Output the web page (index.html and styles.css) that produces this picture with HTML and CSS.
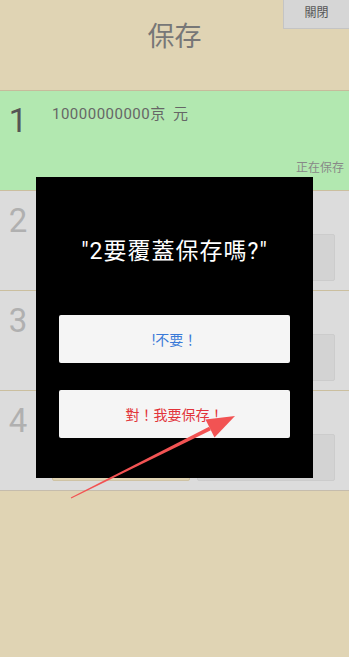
FILE: index.html
```html
<!DOCTYPE html>
<html lang="zh-Hant">
<head>
    <meta charset="UTF-8">
    <meta name="viewport" content="width=device-width, initial-scale=1.0">
    <title>保存</title>
    <link rel="stylesheet" href="styles.css">
</head>
<body>
    <div class="screen">
        <header class="top">
            <h1 class="title">保存</h1>
            <a class="close">關閉</a>
        </header>

        <div class="slots">
            <div class="slot slot-current">
                <div class="slot-no">1</div>
                <div class="slot-body">
                    <p class="slot-money">10000000000京 元</p>
                    <p class="slot-state">正在保存</p>
                </div>
            </div>
            <div class="slot">
                <div class="slot-no">2</div>
                <div class="slot-body">
                    <div class="slot-actions">
                        <span class="slot-btn"></span>
                        <span class="slot-btn"></span>
                    </div>
                </div>
            </div>
            <div class="slot">
                <div class="slot-no">3</div>
                <div class="slot-body">
                    <div class="slot-actions">
                        <span class="slot-btn"></span>
                        <span class="slot-btn"></span>
                    </div>
                </div>
            </div>
            <div class="slot">
                <div class="slot-no">4</div>
                <div class="slot-body">
                    <div class="slot-actions">
                        <span class="slot-btn slot-btn-light"></span>
                        <span class="slot-btn"></span>
                    </div>
                </div>
            </div>
        </div>

        <!-- confirm dialog -->
        <div class="dialog">
            <p class="dialog-text">"2要覆蓋保存嗎?"</p>
            <button class="dialog-btn btn-no">!不要！</button>
            <button class="dialog-btn btn-yes">對！我要保存！</button>
        </div>

        <!-- annotation arrow -->
        <svg class="arrow" width="349" height="657" viewBox="0 0 349 657">
            <polygon points="71.2,498.4 70.8,497.6 209.1,426.7 210.9,430.3" fill="#f25353"/>
            <polygon points="235,416 205.5,419.6 214.5,437.4" fill="#f25353"/>
        </svg>
    </div>
</body>
</html>
```

FILE: styles.css
```css
body {
    margin: 0;
    padding: 0;
    font-family: Roboto, "Noto Sans CJK TC", sans-serif;
    background-color: #e0d4b4;
    color: #666;
}
.screen {
    position: relative;
    width: 349px;
    height: 657px;
    overflow: hidden;
}
.top {
    position: relative;
    height: 90px;
    border-bottom: 1px solid #c7bb9c;
    display: flex;
    justify-content: center;
}
.title {
    margin: 0;
    padding-top: 17px;
    font-size: 27px;
    font-weight: normal;
    line-height: 40px;
    color: #777;
}
.close {
    position: absolute;
    top: 0;
    right: 0;
    width: 66px;
    height: 29px;
    background-color: #d6d6d6;
    border-left: 1px solid #c4c4c4;
    border-bottom: 1px solid #c4c4c4;
    box-sizing: border-box;
    font-size: 12px;
    line-height: 26px;
    text-align: center;
    color: #555;
}
.slot {
    display: flex;
    height: 99px;
    background-color: #dcdcdc;
    border-bottom: 1px solid #cbbf9f;
}
.slot:last-child {
    border-bottom-color: #c5bcad;
}
.slot-current {
    background-color: #b2e8b0;
}
.slot-no {
    width: 50px;
    padding-top: 10px;
    text-align: center;
    font-size: 33px;
    line-height: 40px;
    color: #b0b0b0;
    box-sizing: border-box;
    padding-right: 14px;
}
.slot-current .slot-no {
    color: #555;
}
.slot-body {
    flex: 1;
    display: flex;
    flex-direction: column;
    padding-right: 14px;
}
.slot-money {
    margin: 0;
    padding-top: 14px;
    padding-left: 2px;
    font-size: 15px;
    letter-spacing: 0.5px;
    word-spacing: 3px;
    line-height: 18px;
    color: #666;
}
.slot-state {
    margin: auto -9px 14px 0;
    text-align: right;
    font-size: 12px;
    line-height: 16px;
    color: #888;
}
.slot-actions {
    margin-top: auto;
    margin-bottom: 9px;
    padding-left: 2px;
    display: flex;
    gap: 7px;
}
.slot-btn {
    flex: 1;
    height: 47px;
    background-color: #d3d3d3;
    border: 1px solid #cccccc;
    border-radius: 2px;
    box-sizing: border-box;
}
.slot-btn-light {
    background-color: #e0d4b4;
    border-color: #cfc3a4;
}
.dialog {
    position: absolute;
    left: 36px;
    top: 177px;
    width: 277px;
    height: 301px;
    background-color: #000;
    box-sizing: border-box;
    padding: 0 23px;
    display: flex;
    flex-direction: column;
}
.dialog-text {
    margin: 60px 0 48px;
    text-align: center;
    font-size: 23px;
    letter-spacing: 1px;
    line-height: 30px;
    color: #fff;
}
.dialog-btn {
    height: 48px;
    border: none;
    border-radius: 2px;
    background-color: #f5f5f5;
    font-family: Roboto, "Noto Sans CJK TC", sans-serif;
    font-size: 14px;
    padding: 0;
}
.btn-no {
    color: #3a7ad8;
    margin-bottom: 27px;
}
.btn-yes {
    color: #e2333a;
}
.arrow {
    position: absolute;
    left: 0;
    top: 0;
}
```
